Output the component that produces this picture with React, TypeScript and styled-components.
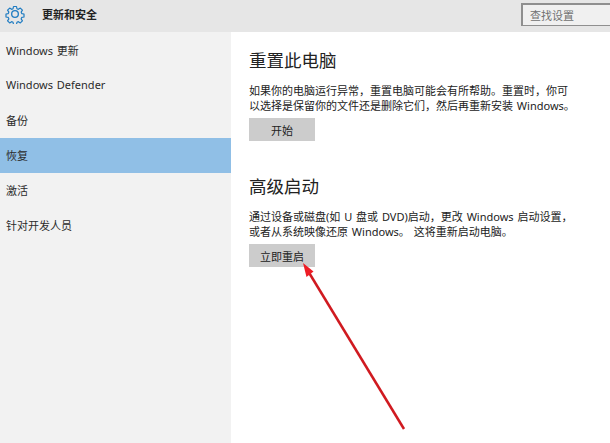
import styled, { createGlobalStyle } from "styled-components"

const GlobalStyle = createGlobalStyle`
    html, body {
        margin: 0;
        padding: 0;
        background: #ffffff;
    }
    body {
        font-family: "Noto Sans", "Noto Sans CJK SC", sans-serif;
        color: #1f1f1f;
    }
`

const navItems = ["Windows 更新", "Windows Defender", "备份", "恢复", "激活", "针对开发人员"]

function GearIcon() {
    return (
        <svg width="20" height="20" viewBox="0 0 24 24" fill="none" stroke="#1f7cc2" strokeWidth="1.6" strokeLinejoin="round">
            <path d="M10 2h4l.6 3 1.9.8 2.6-1.7 2.8 2.8-1.7 2.6.8 1.9 3 .6v4l-3 .6-.8 1.9 1.7 2.6-2.8 2.8-2.6-1.7-1.9.8-.6 3h-4l-.6-3-1.9-.8-2.6 1.7-2.8-2.8 1.7-2.6-.8-1.9-3-.6v-4l3-.6.8-1.9-1.7-2.6 2.8-2.8 2.6 1.7 1.9-.8z" transform="translate(1.2 1.2) scale(0.9)" />
            <circle cx="12" cy="12" r="4" />
        </svg>
    )
}

export default function App() {
    return (
        <Page>
            <GlobalStyle />
            <Header>
                <TitleGroup>
                    <GearIcon />
                    <Title>更新和安全</Title>
                </TitleGroup>
                <SearchBox>查找设置</SearchBox>
            </Header>

            <Body>
                <Sidebar>
                    {navItems.map((item) => (
                        <NavItem key={item} $active={item === "恢复"}>{item}</NavItem>
                    ))}
                </Sidebar>

                <Content>
                    <Section>
                        <Heading>重置此电脑</Heading>
                        <Description>
                            如果你的电脑运行异常，重置电脑可能会有所帮助。重置时，你可<br />
                            以选择是保留你的文件还是删除它们，然后再重新安装 Windows。
                        </Description>
                        <ActionButton>开始</ActionButton>
                    </Section>

                    <Section>
                        <Heading>高级启动</Heading>
                        <Description>
                            通过设备或磁盘(如 U 盘或 DVD)启动，更改 Windows 启动设置，<br />
                            或者从系统映像还原 Windows。 这将重新启动电脑。
                        </Description>
                        <ActionButton>立即重启</ActionButton>
                    </Section>
                </Content>
            </Body>

            <Arrow viewBox="0 0 610 443" width="610" height="443">
                <line x1="404" y1="429" x2="308" y2="271" stroke="#d01a20" strokeWidth="2.5" />
                <polygon points="303,263 313.5,271.5 306.5,277" fill="#ee1c25" />
            </Arrow>
        </Page>
    )
}

const Page = styled.div`
    position: relative;
    width: 610px;
    height: 443px;
    overflow: hidden;
`

const Header = styled.div`
    height: 32px;
    display: flex;
    align-items: center;
    justify-content: space-between;
    background-color: #e6e6e6;
`

const TitleGroup = styled.div`
    display: flex;
    align-items: center;
    gap: 17px;
    padding: 0 0 4px 5px;
`

const Title = styled.span`
    font-size: 11px;
    font-weight: 700;
    color: #222222;
`

const SearchBox = styled.div`
    box-sizing: border-box;
    width: 89px;
    height: 23px;
    margin-bottom: 3px;
    padding-left: 7px;
    display: flex;
    align-items: center;
    font-size: 11px;
    color: #707070;
    background-color: #f0f0f0;
    border: 2px solid #8f8f8f;
    border-right: none;
    border-bottom-width: 1px;
`

const Body = styled.div`
    display: flex;
    height: 411px;
`

const Sidebar = styled.div`
    width: 231px;
    padding-top: 1px;
    background-color: #f2f2f2;
`

const NavItem = styled.div<{ $active?: boolean }>`
    box-sizing: border-box;
    height: 35px;
    padding: 0 0 2px 6px;
    display: flex;
    align-items: center;
    font-size: 11px;
    word-spacing: 1px;
    color: #2b2b2b;
    background-color: ${(props) => (props.$active ? "#90bfe6" : "transparent")};
`

const Content = styled.div`
    flex: 1;
    padding: 15px 0 0 18px;
    display: flex;
    flex-direction: column;
    gap: 32px;
`

const Section = styled.div`
    display: flex;
    flex-direction: column;
    align-items: flex-start;
`

const Heading = styled.h2`
    margin: 0 0 10px;
    font-size: 17.5px;
    line-height: 26px;
    font-weight: 400;
    color: #222222;
`

const Description = styled.p`
    margin: 0 0 5px;
    font-size: 11px;
    line-height: 15px;
    word-spacing: 1px;
    color: #222222;
    white-space: nowrap;
`

const ActionButton = styled.button`
    width: 66px;
    height: 23px;
    padding: 0;
    border: none;
    font-family: inherit;
    font-size: 11px;
    color: #222222;
    background-color: #cccccc;
`

const Arrow = styled.svg`
    position: absolute;
    top: 0;
    left: 0;
    pointer-events: none;
`
